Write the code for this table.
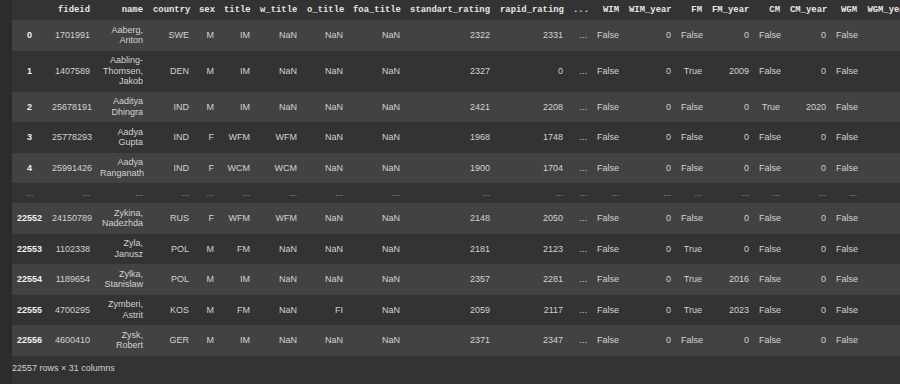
const COLS = [
  { key: 'fideid', w: 48 },
  { key: 'name', w: 53 },
  { key: 'country', w: 46 },
  { key: 'sex', w: 25 },
  { key: 'title', w: 36 },
  { key: 'w_title', w: 47 },
  { key: 'o_title', w: 46 },
  { key: 'foa_title', w: 57 },
  { key: 'standart_rating', w: 90 },
  { key: 'rapid_rating', w: 73 },
  { key: '...', w: 24 },
  { key: 'WIM', w: 32 },
  { key: 'WIM_year', w: 52 },
  { key: 'FM', w: 31 },
  { key: 'FM_year', w: 47 },
  { key: 'CM', w: 31 },
  { key: 'CM_year', w: 46 },
  { key: 'WGM', w: 31 },
  { key: 'WGM_year', w: 53 },
];

const ROWS = [
  ['0', '1701991', 'Aaberg, Anton', 'SWE', 'M', 'IM', 'NaN', 'NaN', 'NaN', '2322', '2331', '...', 'False', '0', 'False', '0', 'False', '0', 'False', '0'],
  ['1', '1407589', 'Aabling-Thomsen, Jakob', 'DEN', 'M', 'IM', 'NaN', 'NaN', 'NaN', '2327', '0', '...', 'False', '0', 'True', '2009', 'False', '0', 'False', '0'],
  ['2', '25678191', 'Aaditya Dhingra', 'IND', 'M', 'IM', 'NaN', 'NaN', 'NaN', '2421', '2208', '...', 'False', '0', 'False', '0', 'True', '2020', 'False', '0'],
  ['3', '25778293', 'Aadya Gupta', 'IND', 'F', 'WFM', 'WFM', 'NaN', 'NaN', '1968', '1748', '...', 'False', '0', 'False', '0', 'False', '0', 'False', '0'],
  ['4', '25991426', 'Aadya Ranganath', 'IND', 'F', 'WCM', 'WCM', 'NaN', 'NaN', '1900', '1704', '...', 'False', '0', 'False', '0', 'False', '0', 'False', '0'],
  null,
  ['22552', '24150789', 'Zykina, Nadezhda', 'RUS', 'F', 'WFM', 'WFM', 'NaN', 'NaN', '2148', '2050', '...', 'False', '0', 'False', '0', 'False', '0', 'False', '0'],
  ['22553', '1102338', 'Zyla, Janusz', 'POL', 'M', 'FM', 'NaN', 'NaN', 'NaN', '2181', '2123', '...', 'False', '0', 'True', '0', 'False', '0', 'False', '0'],
  ['22554', '1189654', 'Zylka, Stanislaw', 'POL', 'M', 'IM', 'NaN', 'NaN', 'NaN', '2357', '2281', '...', 'False', '0', 'True', '2016', 'False', '0', 'False', '0'],
  ['22555', '4700295', 'Zymberi, Astrit', 'KOS', 'M', 'FM', 'NaN', 'FI', 'NaN', '2059', '2117', '...', 'False', '0', 'True', '2023', 'False', '0', 'False', '0'],
  ['22556', '4600410', 'Zysk, Robert', 'GER', 'M', 'IM', 'NaN', 'NaN', 'NaN', '2371', '2347', '...', 'False', '0', 'False', '0', 'False', '0', 'False', '0'],
];

export default function App() {
  return (
    <div className="w-[900px] h-[384px] overflow-hidden bg-[#2c2c2c] pl-[12px] font-['Liberation_Sans',Arial,sans-serif]">
      <div className="h-full bg-[#333333] overflow-hidden">
        <table className="table-fixed w-[903px] text-[9px] leading-[10.5px] text-[#d2d2d2]">
          <colgroup>
            <col className="w-[35px]" />
            {COLS.map((c) => (
              <col key={c.key} style={{ width: c.w }} />
            ))}
          </colgroup>
          <thead>
            <tr>
              <th className="py-[4.75px]" />
              {COLS.map((c) => (
                <th
                  key={c.key}
                  className="px-[5px] py-[4.75px] text-right whitespace-nowrap font-bold font-['Liberation_Mono',monospace] text-[8.9px] text-[#e6e6e6]"
                >
                  {c.key}
                </th>
              ))}
            </tr>
          </thead>
          <tbody>
            {ROWS.map((row, i) => {
              const bg = i % 2 === 0 ? 'bg-[#424242]' : '';
              if (!row) {
                return (
                  <tr key={i} className={bg}>
                    <th className="py-[4.75px] text-center font-normal text-[#9a9a9a]">...</th>
                    {COLS.map((c) => (
                      <td key={c.key} className="px-[5px] py-[4.75px] text-right text-[#9a9a9a]">
                        ...
                      </td>
                    ))}
                  </tr>
                );
              }
              return (
                <tr key={i} className={bg}>
                  <th className="py-[4.75px] text-center font-bold text-[#f0f0f0]">{row[0]}</th>
                  {row.slice(1).map((v, j) => (
                    <td key={j} className="px-[5px] py-[4.75px] text-right align-middle">
                      {v}
                    </td>
                  ))}
                </tr>
              );
            })}
          </tbody>
        </table>
        <p className="mt-[7px] text-[9px] leading-[10.5px] text-[#d2d2d2]">22557 rows × 31 columns</p>
      </div>
    </div>
  );
}
